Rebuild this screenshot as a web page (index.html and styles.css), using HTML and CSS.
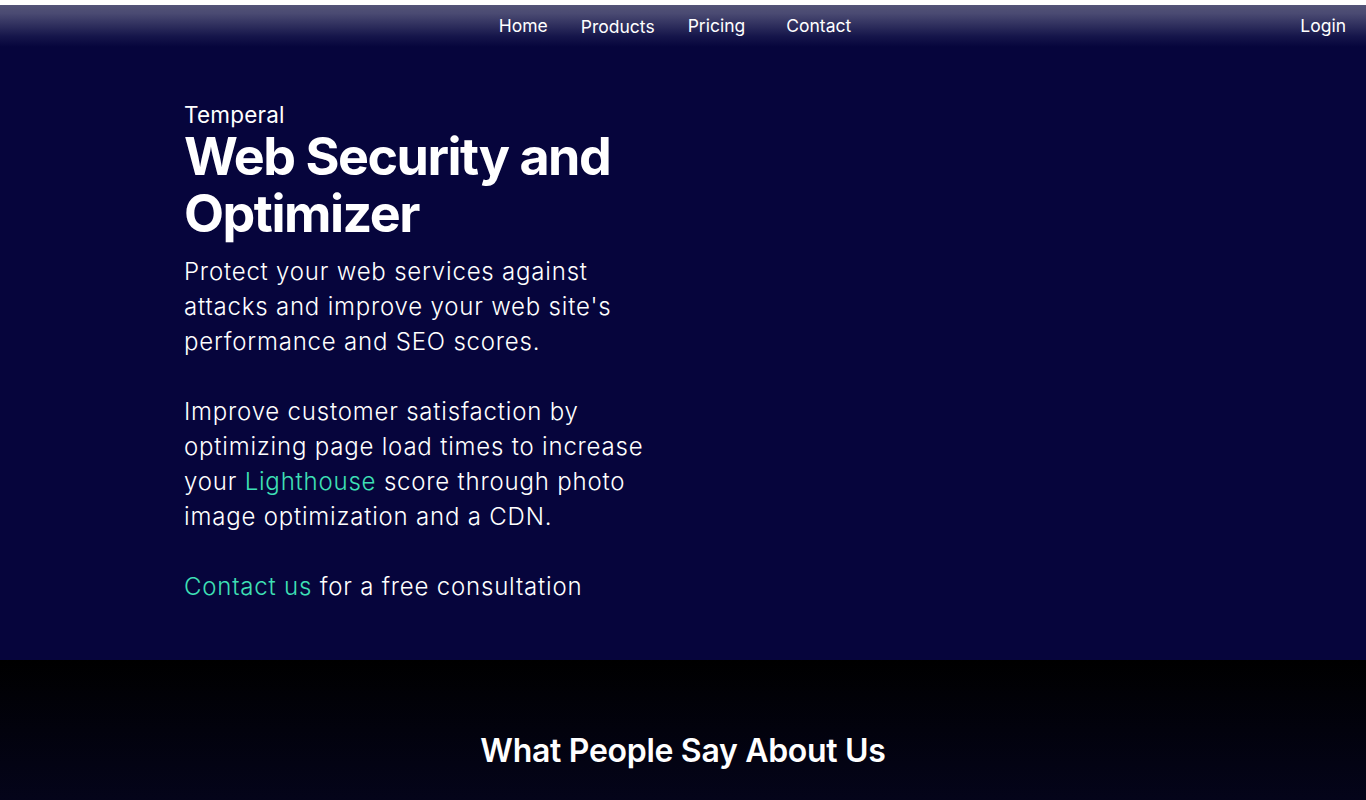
FILE: index.html
```html
<!DOCTYPE html>
<html lang="en">
<head>
  <meta charset="UTF-8" />
  <meta name="viewport" content="width=device-width, initial-scale=1.0" />
  <title>Temperal - Web Security and Optimizer</title>
  <link rel="stylesheet" href="styles.css">
</head>
<body>
  <header class="topbar">
    <div></div>
    <nav class="nav-links">
      <a href="#" class="nav-home">Home</a>
      <a href="#" class="nav-products">Products</a>
      <a href="#" class="nav-pricing">Pricing</a>
      <a href="#" class="nav-contact">Contact</a>
    </nav>
    <div class="nav-right">
      <a href="#">Login</a>
    </div>
  </header>

  <section class="hero">
    <div class="hero-text">
      <p class="brand">Temperal</p>
      <h1>Web Security and Optimizer</h1>
      <p>Protect your web services against attacks and improve your web site's performance and SEO scores.</p>
      <p>Improve customer satisfaction by optimizing page load times to increase your <a href="#" class="accent">Lighthouse</a> score through photo image optimization and a CDN.</p>
      <p><a href="#" class="accent">Contact us</a> for a free consultation</p>
    </div>
  </section>

  <section class="testimonials">
    <h2>What People Say About Us</h2>
  </section>
</body>
</html>
```

FILE: styles.css
```css
body {
  margin: 0;
  padding-top: 5px;
  background: #fff;
  font-family: Inter, "Open Sans", sans-serif;
  color: #fff;
}
a {
  color: inherit;
  text-decoration: none;
}
.topbar {
  display: grid;
  grid-template-columns: 1fr auto 1fr;
  align-items: center;
  height: 42px;
  box-sizing: border-box;
  padding: 0 20px 2px 0;
  background: linear-gradient(to bottom, #535377 0%, #4a4a72 20%, #15154a 75%, #06053c 100%);
  font-size: 17.5px;
}
.nav-links {
  display: flex;
  align-items: center;
  margin-left: 4px;
}
.nav-links a {
  margin-right: 33px;
}
.nav-links .nav-products {
  margin-top: 2px;
}
.nav-links .nav-pricing {
  margin-right: 41px;
}
.nav-links .nav-contact {
  margin-right: 0;
}
.nav-right {
  text-align: right;
}
.hero {
  background: #06053c;
  height: 613px;
  padding-left: 184px;
  box-sizing: border-box;
  padding-top: 53px;
}
.hero-text {
  width: 475px;
}
.hero-text p {
  margin: 0 0 35px;
  font-size: 24px;
  line-height: 35px;
  font-weight: 300;
  letter-spacing: 0.8px;
}
.hero-text .brand {
  margin: 0 0 -2px;
  font-size: 22.5px;
  line-height: 30px;
  font-weight: 400;
  letter-spacing: 0.2px;
}
.hero h1 {
  margin: 0 0 12px;
  font-size: 52px;
  line-height: 57px;
  font-weight: 700;
  letter-spacing: -1.5px;
}
.accent {
  color: #3ee0b6;
}
.testimonials {
  background: linear-gradient(to bottom, #000000 0%, #04041a 100%);
  height: 140px;
  box-sizing: border-box;
  padding-top: 71px;
  text-align: center;
}
.testimonials h2 {
  margin: 0;
  font-size: 32px;
  font-weight: 600;
  letter-spacing: -0.3px;
}
```
